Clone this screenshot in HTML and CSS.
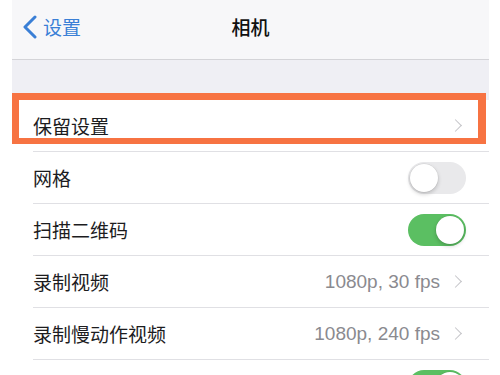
FILE: index.html
```html
<!DOCTYPE html>
<html lang="zh-CN">
<head>
  <meta charset="UTF-8">
  <meta name="viewport" content="width=device-width, initial-scale=1.0">
  <link rel="stylesheet" href="styles.css">
</head>
<body>
  <div class="screen">
    <div class="navbar">
      <div class="back">
        <svg class="back-icon" width="16" height="24" viewBox="0 0 16 24">
          <polyline points="13,2 3,12 13,22" fill="none" stroke="#3a7fd6" stroke-width="3" stroke-linecap="round" stroke-linejoin="round"/>
        </svg>
        <span>设置</span>
      </div>
      <div class="title">相机</div>
      <div></div>
    </div>

    <div class="group-gap"></div>

    <div class="list">
      <div class="row">
        <div class="row-inner">
          <span class="label">保留设置</span>
          <span class="chevron"></span>
        </div>
      </div>
      <div class="row">
        <div class="row-inner">
          <span class="label">网格</span>
          <span class="switch"></span>
        </div>
      </div>
      <div class="row">
        <div class="row-inner">
          <span class="label">扫描二维码</span>
          <span class="switch on"></span>
        </div>
      </div>
      <div class="row">
        <div class="row-inner">
          <span class="label">录制视频</span>
          <span class="value">1080p, 30 fps</span>
          <span class="chevron"></span>
        </div>
      </div>
      <div class="row">
        <div class="row-inner">
          <span class="label">录制慢动作视频</span>
          <span class="value">1080p, 240 fps</span>
          <span class="chevron"></span>
        </div>
      </div>
      <div class="row">
        <div class="row-inner">
          <span class="label"></span>
          <span class="switch on"></span>
        </div>
      </div>
    </div>

    <!-- hand-drawn highlight over the first row -->
    <div class="highlight"></div>
  </div>
</body>
</html>
```

FILE: styles.css
```css
body {
  margin: 0;
  background-color: #ffffff;
  font-family: 'Liberation Sans', 'Noto Sans CJK SC', sans-serif;
  color: #1c1c1e;
  overflow: hidden;
}

.screen {
  position: relative;
  margin: 0 11px 0 12px;
  background-color: #ffffff;
}

.navbar {
  height: 59px;
  background-color: #f7f7f9;
  border-bottom: 1px solid #d4d4d8;
  display: grid;
  grid-template-columns: 1fr auto 1fr;
  align-items: center;
}

.back {
  display: flex;
  align-items: center;
  gap: 5px;
  padding-left: 10px;
  color: #3a7fd6;
  font-size: 19px;
  margin-top: -6px;
}

.back-icon {
  flex: none;
}

.title {
  font-size: 19px;
  font-weight: 500;
  color: #111;
  margin-top: -6px;
}

.group-gap {
  height: 40px;
  background-color: #efeff4;
}

.row {
  background-color: #ffffff;
  padding-left: 21px;
}

.row-inner {
  height: 51px;
  border-bottom: 1px solid #e0e0e4;
  display: flex;
  align-items: center;
  padding-right: 23px;
}

.label {
  font-size: 19px;
  flex: 1;
}

.value {
  font-size: 19px;
  color: #8a8a8f;
  margin-right: 11px;
}

.chevron {
  width: 8px;
  height: 8px;
  border-top: 1.8px solid #c4c4c8;
  border-right: 1.8px solid #c4c4c8;
  transform: rotate(45deg);
  margin-right: 6px;
}

.switch {
  position: relative;
  width: 58px;
  height: 32px;
  border-radius: 16px;
  background-color: #e9e9eb;
}

.switch::after {
  content: '';
  position: absolute;
  top: 2px;
  left: 2px;
  width: 28px;
  height: 28px;
  border-radius: 50%;
  background-color: #ffffff;
  box-shadow: 0 2px 4px rgba(0, 0, 0, 0.2), 0 0 0 0.5px rgba(0, 0, 0, 0.08);
}

.switch.on {
  background-color: #5bbf62;
}

.switch.on::after {
  left: 28px;
}

.highlight {
  position: absolute;
  left: 0;
  top: 93px;
  width: 459px;
  height: 38px;
  border: 7px solid #f77342;
  border-right-width: 8px;
  border-bottom-width: 6px;
}
```
